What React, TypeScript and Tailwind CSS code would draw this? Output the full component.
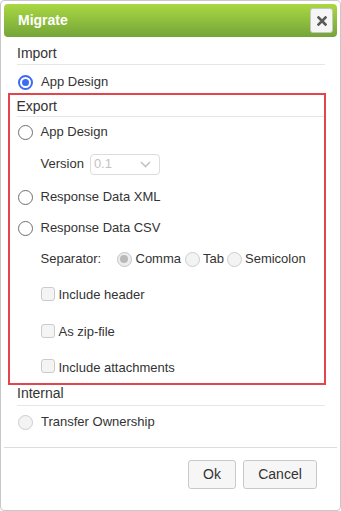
import React from 'react';

type RadioState = 'checked' | 'off' | 'disabledChecked' | 'disabledOff';

function Radio({ state }: { state: RadioState }) {
  if (state === 'checked') {
    return (
      <span className="w-[15px] h-[15px] rounded-full border-2 border-[#3d6cf2] bg-white flex items-center justify-center shrink-0">
        <span className="w-[7px] h-[7px] rounded-full bg-[#3d6cf2]" />
      </span>
    );
  }
  if (state === 'disabledChecked') {
    return (
      <span className="w-[15px] h-[15px] rounded-full border border-[#c4c4c4] bg-[#ededed] flex items-center justify-center shrink-0">
        <span className="w-[8px] h-[8px] rounded-full bg-[#b9b9b9]" />
      </span>
    );
  }
  if (state === 'disabledOff') {
    return <span className="block w-[15px] h-[15px] rounded-full border border-[#cdcdcd] bg-[#f3f3f3] shrink-0" />;
  }
  return <span className="block w-[15px] h-[15px] rounded-full border-[1.5px] border-[#6e6e6e] bg-white shrink-0" />;
}

function Checkbox() {
  return <span className="block w-[14px] h-[14px] rounded-[3px] border border-[#cbcbcb] bg-[#f4f4f4] shrink-0" />;
}

function RadioRow({ label, state, h }: { label: string; state: RadioState; h: string }) {
  return (
    <div className={`flex items-center ${h}`}>
      <div className="pl-[1px]">
        <Radio state={state} />
      </div>
      <span className="ml-[8px]">{label}</span>
    </div>
  );
}

function CheckRow({ label, h }: { label: string; h: string }) {
  return (
    <div className={`flex items-center pl-[24px] ${h}`}>
      <Checkbox />
      <span className="ml-[4px] pt-[3px]">{label}</span>
    </div>
  );
}

export default function App() {
  return (
    <div className="w-[341px] h-[511px] bg-white">
      <div
        className="w-[341px] h-[511px] border border-[#c8c8c8] rounded-[4px] p-[3px] flex flex-col text-[13px] text-[#333]"
        style={{ fontFamily: '"Liberation Sans", Arial, sans-serif' }}
      >
        {/* 标题栏 */}
        <div className="h-[33px] shrink-0 rounded-[4px] bg-gradient-to-b from-[#aad843] to-[#74a539] flex items-center justify-between pl-[14px] pr-[4px]">
          <span className="text-white font-bold text-[14px]">Migrate</span>
          <button className="w-[23px] h-[25px] rounded-[3px] border border-[#c6c6c6] bg-[#f6f6f6] flex items-center justify-center">
            <svg width="10" height="10" viewBox="0 0 10 10">
              <path d="M1.5 1.5 L8.5 8.5 M8.5 1.5 L1.5 8.5" stroke="#5a5a5a" strokeWidth="2.6" strokeLinecap="square" />
            </svg>
          </button>
        </div>

        {/* 内容 */}
        <div className="flex-1 pl-[13px] pr-[12px] pt-[8px]">
          <div className="text-[14px] leading-[16px] pb-[3px] border-b border-[#e6e6e6]">Import</div>
          <div className="pt-[6px]">
            <RadioRow label="App Design" state="checked" h="h-[22px]" />
          </div>

          <div className="ml-[-9px] mr-[-1px] border-[2.5px] border-[#e3464a] pl-[6.5px]">
            <div className="text-[14px] leading-[16px] pt-[3px] pb-[2px] border-b border-[#e6e6e6]">Export</div>
            <RadioRow label="App Design" state="off" h="h-[30px]" />
            <div className="flex items-center h-[34px] pl-[24px]">
              <span>Version</span>
              <div className="ml-[6px] w-[70px] h-[21px] border border-[#dcdcdc] rounded-[4px] flex items-center justify-between pl-[3px] pr-[8px] text-[#c2c2c2]">
                <span>0.1</span>
                <svg width="11" height="7" viewBox="0 0 11 7">
                  <path d="M1 1 L5.5 5.5 L10 1" fill="none" stroke="#c4c4c4" strokeWidth="1.6" />
                </svg>
              </div>
            </div>
            <RadioRow label="Response Data XML" state="off" h="h-[32px]" />
            <RadioRow label="Response Data CSV" state="off" h="h-[30px]" />
            <div className="flex items-center h-[32px] pl-[24px]">
              <span className="w-[76px]">Separator:</span>
              <Radio state="disabledChecked" />
              <span className="ml-[4px]">Comma</span>
              <span className="ml-[4px]">
                <Radio state="disabledOff" />
              </span>
              <span className="ml-[3px]">Tab</span>
              <span className="ml-[3px]">
                <Radio state="disabledOff" />
              </span>
              <span className="ml-[3px]">Semicolon</span>
            </div>
            <CheckRow label="Include header" h="h-[37px]" />
            <CheckRow label="As zip-file" h="h-[37px]" />
            <CheckRow label="Include attachments" h="h-[34px]" />
          </div>

          <div className="text-[14px] leading-[16px] pb-[4px] border-b border-[#e6e6e6]">Internal</div>
          <RadioRow label="Transfer Ownership" state="disabledOff" h="h-[32px]" />
        </div>

        {/* 底部按钮 */}
        <div className="shrink-0 border-t border-[#dcdcdc] h-[60px] flex items-start justify-end gap-[7px] pt-[12px] pr-[20px]">
          <button className="w-[48px] h-[29px] rounded-[3px] border border-[#c9c9c9] bg-[#f6f6f6] text-[14px] text-[#333]">Ok</button>
          <button className="w-[74px] h-[29px] rounded-[3px] border border-[#c9c9c9] bg-[#f6f6f6] text-[14px] text-[#333]">Cancel</button>
        </div>
      </div>
    </div>
  );
}
